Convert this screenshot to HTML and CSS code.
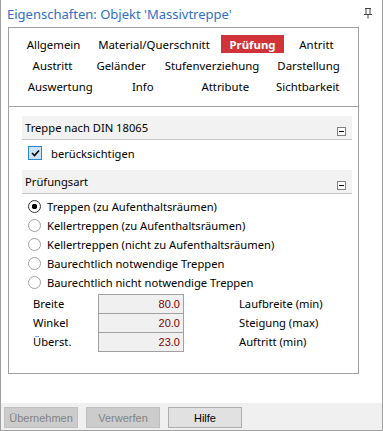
FILE: index.html
```html
<!DOCTYPE html>
<html lang="de">
<head>
    <meta charset="UTF-8">
    <meta name="viewport" content="width=device-width, initial-scale=1.0">
    <title>Eigenschaften</title>
    <link rel="stylesheet" href="styles.css">
</head>
<body>
    <div class="window">
        <!-- Title bar -->
        <div class="title">
            <span class="title-text">Eigenschaften: Objekt 'Massivtreppe'</span>
            <svg class="pin" width="8" height="11" viewBox="0 0 8 11">
                <path d="M1 0.5h6M2 0.5v6M6 0.5v6M0 6.5h8M4 6.5v4" stroke="#444" stroke-width="1" fill="none"/>
            </svg>
        </div>

        <div class="panel">
            <!-- Tabs -->
            <div class="tabs">
                <div class="tab-row row1">
                    <span class="tab">Allgemein</span>
                    <span class="tab">Material/Querschnitt</span>
                    <span class="tab active">Prüfung</span>
                    <span class="tab">Antritt</span>
                </div>
                <div class="tab-row row2">
                    <span class="tab">Austritt</span>
                    <span class="tab">Geländer</span>
                    <span class="tab">Stufenverziehung</span>
                    <span class="tab">Darstellung</span>
                </div>
                <div class="tab-row row3">
                    <span class="tab">Auswertung</span>
                    <span class="tab">Info</span>
                    <span class="tab">Attribute</span>
                    <span class="tab">Sichtbarkeit</span>
                </div>
            </div>

            <!-- Section: DIN -->
            <div class="section-head first">
                <span>Treppe nach DIN 18065</span>
                <span class="collapse"></span>
            </div>
            <div class="check-row">
                <span class="checkbox">
                    <svg width="9" height="8" viewBox="0 0 9 8">
                        <path d="M1 4l2.5 2.5L8 1.5" stroke="#000" stroke-width="1.6" fill="none"/>
                    </svg>
                </span>
                <span>berücksichtigen</span>
            </div>

            <!-- Section: Prüfungsart -->
            <div class="section-head">
                <span>Prüfungsart</span>
                <span class="collapse"></span>
            </div>
            <div class="radios">
                <div class="radio-row"><span class="radio checked"></span>Treppen (zu Aufenthaltsräumen)</div>
                <div class="radio-row"><span class="radio"></span>Kellertreppen (zu Aufenthaltsräumen)</div>
                <div class="radio-row"><span class="radio"></span>Kellertreppen (nicht zu Aufenthaltsräumen)</div>
                <div class="radio-row"><span class="radio"></span>Baurechtlich notwendige Treppen</div>
                <div class="radio-row"><span class="radio"></span>Baurechtlich nicht notwendige Treppen</div>
            </div>

            <div class="fields">
                <span class="field-label">Breite</span>
                <span class="field-value">80.0</span>
                <span class="field-note">Laufbreite (min)</span>

                <span class="field-label">Winkel</span>
                <span class="field-value">20.0</span>
                <span class="field-note">Steigung (max)</span>

                <span class="field-label">Überst.</span>
                <span class="field-value">23.0</span>
                <span class="field-note">Auftritt (min)</span>
            </div>
        </div>

        <div class="spacer"></div>

        <!-- Buttons -->
        <div class="footer">
            <button class="btn" disabled>Übernehmen</button>
            <button class="btn" disabled>Verwerfen</button>
            <button class="btn">Hilfe</button>
        </div>
    </div>
</body>
</html>
```

FILE: styles.css
```css
/* Property dialog */
body {
    margin: 0;
    font-family: "Noto Sans", sans-serif;
    font-size: 11.2px;
    color: #000;
    background: #fff;
}

.window {
    width: 383px;
    height: 431px;
    box-sizing: border-box;
    border: 1px solid #a0a0a0;
    border-top: none;
    display: flex;
    flex-direction: column;
}

.title {
    height: 27px;
    display: flex;
    align-items: center;
    justify-content: space-between;
    padding: 0 10px 0 6px;
    flex-shrink: 0;
}

.title-text {
    color: #2f6fc6;
    font-size: 13px;
}

.pin {
    margin-top: -1px;
}

.panel {
    height: 347px;
    box-sizing: border-box;
    margin: 0 23px 0 7px;
    border: 1px solid #a0a0a0;
    flex-shrink: 0;
}

.tabs {
    padding: 7px 9px 11px 10px;
    border-bottom: 1px solid #a0a0a0;
    display: flex;
    flex-direction: column;
    gap: 3px;
    font-size: 11.4px;
}

.tab-row {
    display: grid;
    height: 18px;
}

.row1 { grid-template-columns: 69px 132px 64px 1fr; }
.row2 { grid-template-columns: 67px 70px 112px 1fr; }
.row3 { grid-template-columns: repeat(4, 1fr); }

.tab {
    display: flex;
    align-items: center;
    justify-content: center;
    white-space: nowrap;
}

.tab.active {
    background: #d13438;
    color: #fff;
    font-weight: bold;
    margin-left: 1px;
}

.section-head {
    height: 23px;
    margin: 9px 6px 0 13px;
    padding-left: 3px;
    background: #f2f2f2;
    border-bottom: 1px solid #c8c8c8;
    display: flex;
    align-items: center;
    justify-content: space-between;
}

.section-head + .radios {
    margin-top: 3px;
}

.collapse {
    width: 7px;
    height: 7px;
    border: 1px solid #808080;
    background: #fff;
    align-self: flex-end;
    margin: 0 6px 3px 0;
    position: relative;
}

.collapse::after {
    content: "";
    position: absolute;
    left: 1px;
    right: 1px;
    top: 3px;
    height: 1px;
    background: #000;
}

.check-row {
    height: 26px;
    padding: 0 0 4px 19px;
    display: flex;
    align-items: center;
    gap: 9px;
}

.check-row + .section-head {
    margin-top: 0;
}

.checkbox {
    width: 12px;
    height: 12px;
    border: 1px solid #2b86d6;
    background: #cce4f7;
    display: flex;
    align-items: center;
    justify-content: center;
}

.radios {
    padding-left: 19px;
}

.radio-row {
    height: 19px;
    display: flex;
    align-items: center;
    gap: 6px;
}

.radio {
    width: 11px;
    height: 11px;
    border: 1px solid #a0a0a0;
    border-radius: 50%;
    background: #fff;
}

.radio.checked {
    border-color: #333;
    background: radial-gradient(circle, #000 0 2.5px, #fff 3px);
}

.fields {
    display: grid;
    grid-template-columns: 65px 86px auto;
    margin: 2px 0 0 24px;
}

.field-label,
.field-note {
    display: flex;
    align-items: center;
    height: 19px;
    white-space: nowrap;
}

.field-note {
    padding-left: 55px;
}

.field-value {
    height: 18px;
    border: 1px solid #a0a0a0;
    background: #f0f0f0;
    color: #800000;
    font-family: "Liberation Sans", sans-serif;
    font-size: 11px;
    text-align: right;
    padding-right: 3px;
    line-height: 18px;
    margin-bottom: -1px;
}

.spacer {
    flex: 1;
}

.footer {
    height: 27px;
    background: #f0f0f0;
    padding: 4px 0 0 3px;
    box-sizing: border-box;
    display: flex;
    align-items: flex-start;
    gap: 8px;
}

.btn {
    width: 74px;
    height: 21px;
    margin: 0;
    padding: 0;
    border: 1px solid #adadad;
    background: #e1e1e1;
    font-family: "Liberation Sans", sans-serif;
    font-size: 11px;
    color: #000;
}

.btn:disabled {
    background: #cccccc;
    border-color: #bfbfbf;
    color: #838383;
}
```
